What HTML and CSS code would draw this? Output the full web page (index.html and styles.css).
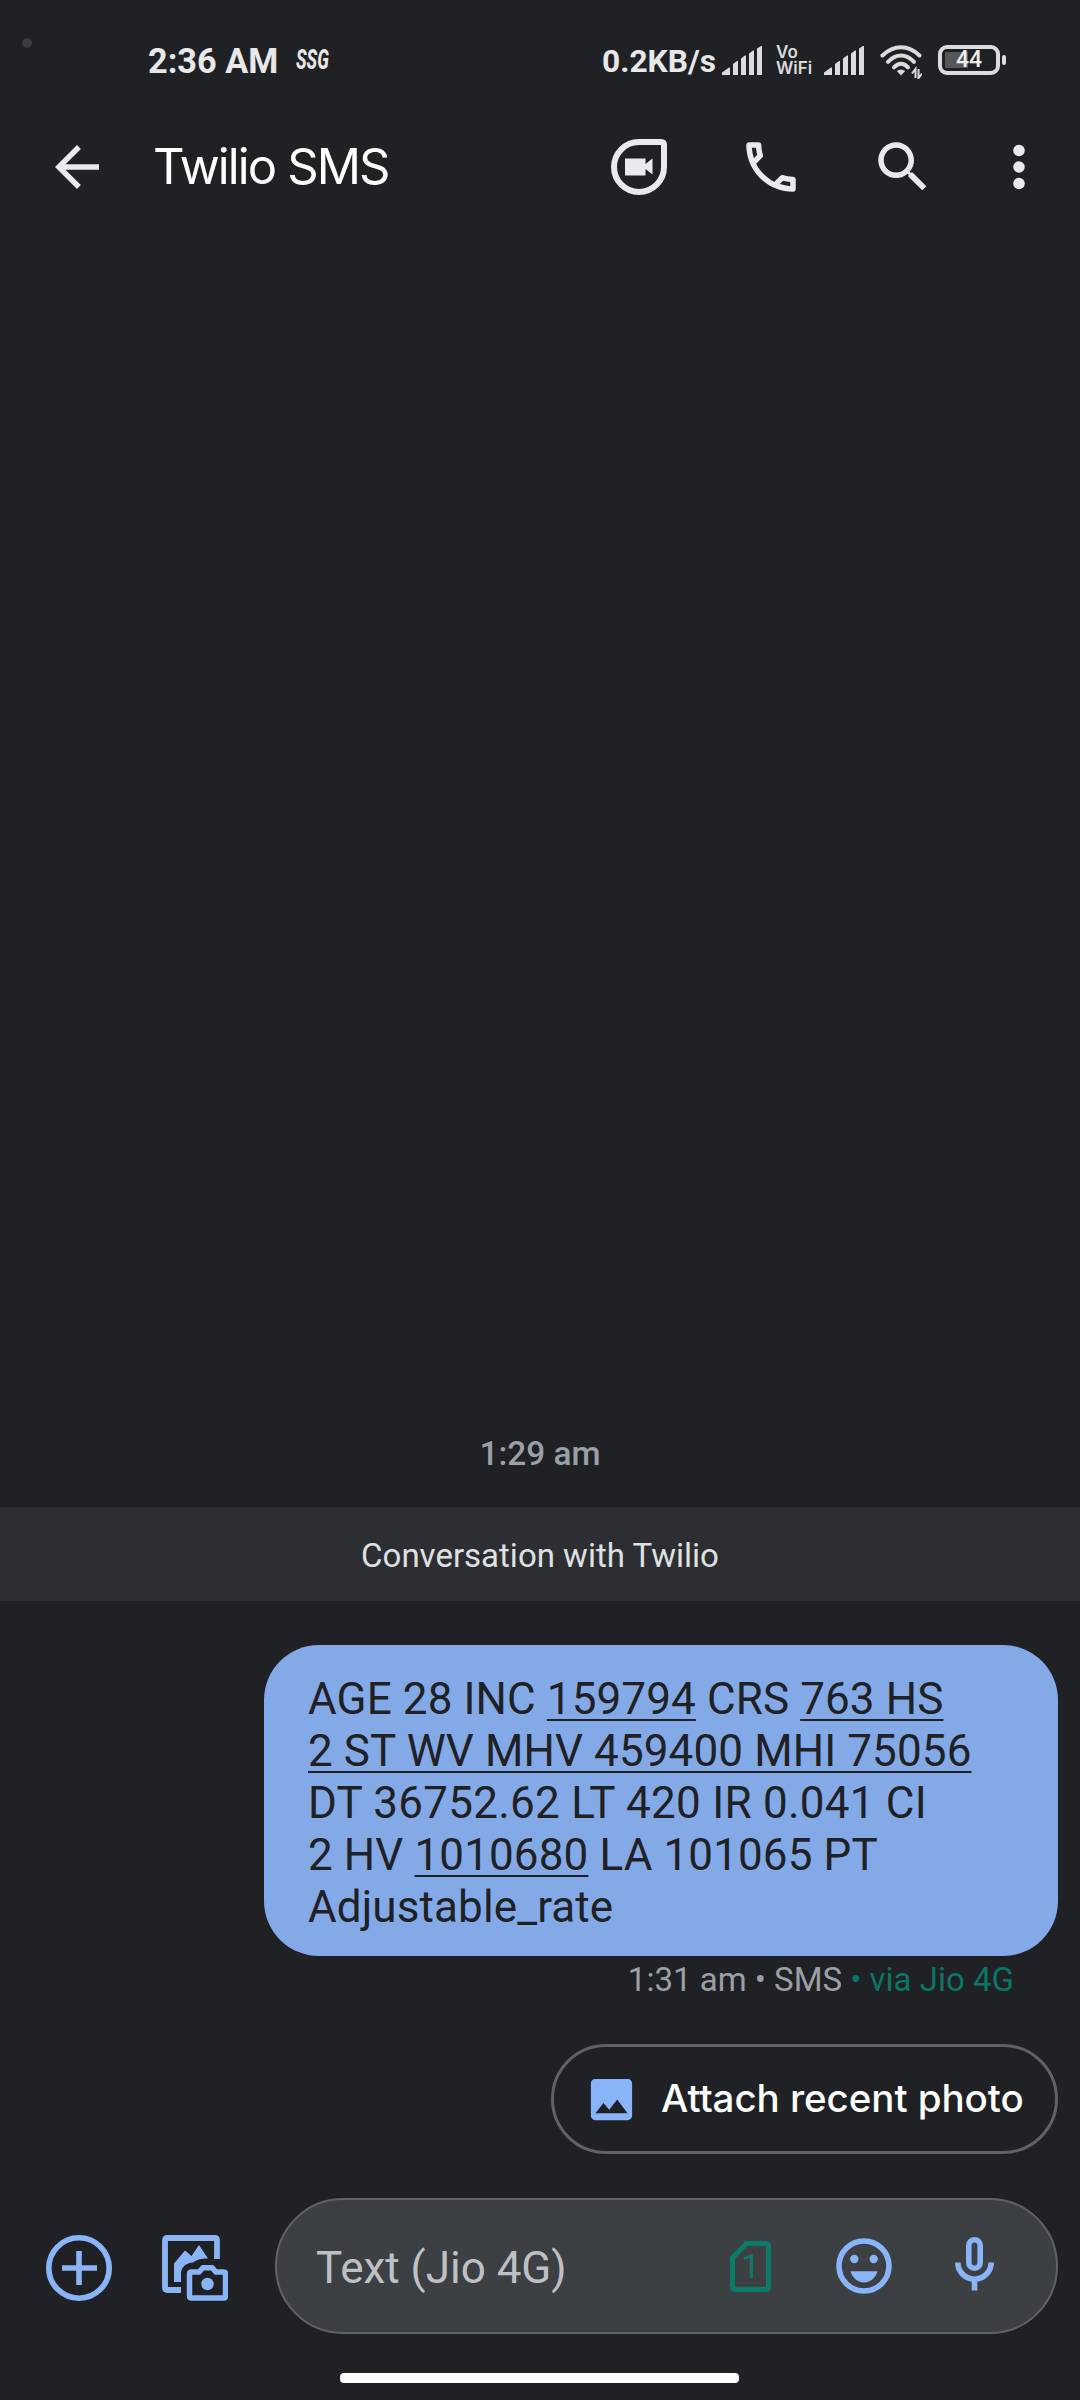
FILE: index.html
```html
<!DOCTYPE html>
<html lang="en">
<head>
<meta charset="utf-8">
<title>Twilio SMS</title>
<link rel="stylesheet" href="styles.css">
</head>
<body>
<div class="screen">
  <div class="status">
    <span class="dot"></span>
    <span class="clock">2:36 AM</span>
    <span class="ssg">SSG</span>
    <span class="speed">0.2KB/s</span>
    <svg class="bars" viewBox="0 0 40 29"><path d="M0 29v-2.500l7-5h1V29zM11 29V18l4-3h1v14zM19 29V12.500l4-3h1V29zM27 29V7.500l4-3h1V29zM35 29V2.500l4-2.500h1v29z"/></svg>
    <span class="vowifi"><span>Vo</span><span>WiFi</span></span>
    <svg class="bars" viewBox="0 0 40 29"><path d="M0 29v-2.500l7-5h1V29zM11 29V18l4-3h1v14zM19 29V12.500l4-3h1V29zM27 29V7.500l4-3h1V29zM35 29V2.500l4-2.500h1v29z"/></svg>
    <svg class="wifi" viewBox="0 0 42 34"><g fill="none" stroke="#dcdcdc" stroke-width="4" stroke-linecap="round"><path d="M2.500 10.500Q11 2.200 21 2.200t18.500 8.300"/><path d="M8 16.800q6-6.300 13-6.300t13 6.300"/><path d="M14 22.300q3.500-3.600 7-3.600t7 3.600"/></g><path fill="#dcdcdc" d="M16.800 26q4.200-3 8.400 0L21 30.500z"/><path fill="none" stroke="#dcdcdc" stroke-width="2" d="M35.500 33v-9l-3.500 4.500M38.500 24v9l3.500-4.500"/></svg>
    <span class="battery"><b>44</b></span>
  </div>

  <header class="appbar">
    <svg class="icon" viewBox="0 0 24 24"><path d="M20 11H7.830l5.590-5.590L12 4l-8 8 8 8 1.410-1.410L7.830 13H20v-2z"/></svg>
    <h1>Twilio SMS</h1>
    <svg class="icon duo" viewBox="0 0 66 66"><path fill="none" stroke="#e8eaed" stroke-width="6" d="M33 8h22q3 0 3 3v22a25 25 0 1 1-25-25z"/><path d="M19 24.500h20.500V30l7-5.500v16l-7-5.500v6.500H19z"/></svg>
    <svg class="icon phone" viewBox="0 0 24 24"><path d="M6.540 5c.06.89.21 1.760.45 2.590l-1.200 1.200c-.41-1.200-.67-2.470-.76-3.790h1.510m9.860 12.020c.85.24 1.720.39 2.600.45v1.490c-1.320-.09-2.590-.35-3.800-.75l1.200-1.190M7.500 3H4c-.55 0-1 .45-1 1 0 9.390 7.610 17 17 17 .55 0 1-.45 1-1v-3.490c0-.55-.45-1-1-1-1.240 0-2.450-.2-3.570-.57-.1-.04-.21-.05-.31-.05-.26 0-.51.1-.71.290l-2.200 2.200c-2.830-1.450-5.150-3.760-6.590-6.590l2.200-2.200c.28-.28.36-.67.25-1.020C8.700 6.450 8.500 5.250 8.500 4c0-.55-.45-1-1-1z"/></svg>
    <svg class="icon search" viewBox="0 0 24 24"><path d="M15.500 14h-.79l-.28-.27C15.410 12.590 16 11.110 16 9.500 16 5.910 13.090 3 9.500 3S3 5.910 3 9.500 5.910 16 9.500 16c1.610 0 3.090-.59 4.230-1.570l.27.28v.79l5 4.990L20.490 19l-4.990-5zm-6 0C7.010 14 5 11.990 5 9.500S7.010 5 9.500 5 14 7.010 14 9.500 11.990 14 9.500 14z"/></svg>
    <svg class="icon more" viewBox="0 0 24 24"><circle cx="12" cy="6" r="2.100"/><circle cx="12" cy="12" r="2.100"/><circle cx="12" cy="18" r="2.100"/></svg>
  </header>

  <main class="thread">
    <div class="time">1:29 am</div>
    <div class="banner">Conversation with Twilio</div>
    <div class="bubble">
      <div>AGE 28 INC <u>159794</u> CRS <u>763 HS</u></div>
      <div><u>2 ST WV MHV 459400 MHI 75056</u></div>
      <div class="loose">DT 36752.62 LT 420 IR 0.041 CI</div>
      <div>2 HV <u>1010680</u> LA 101065 PT</div>
      <div>Adjustable_rate</div>
    </div>
    <div class="meta">1:31 am • SMS <span>• via Jio 4G</span></div>
  </main>

  <button class="chip">
    <svg viewBox="0 0 24 24"><path d="M21 19V5c0-1.100-.9-2-2-2H5c-1.100 0-2 .9-2 2v14c0 1.100.9 2 2 2h14c1.100 0 2-.9 2-2zM8.500 13.500l2.500 3.010L14.500 12l4.500 6H5l3.500-4.500z"/></svg>
    <span>Attach recent photo</span>
  </button>

  <footer class="composer">
    <svg class="icon attach" viewBox="0 0 66 66"><circle cx="33" cy="33" r="30.200" fill="none" stroke="#8ab4f8" stroke-width="5.600"/><path d="M30.200 16h5.600v14.200H51v5.600H35.800V50h-5.600V35.800H16v-5.600h14.200z"/></svg>
    <svg class="icon gallery" viewBox="0 0 66 66"><path fill="none" stroke="#8ab4f8" stroke-width="5.800" d="M19 55H5.500Q3 55 3 52.500v-47Q3 3 5.500 3h47Q55 3 55 5.500V24"/><path d="M12 47V28.500L23 15.500l6.500 5.500L37 10l9 13.500c-6-.5-11 1-15 4-7 0-12 5-12 11V47z"/><path fill="none" stroke="#8ab4f8" stroke-width="5.500" d="M29.500 37h7.500l4-4.300h9l4 4.300h7.500q2 0 2 2v22q0 2-2 2h-32q-2 0-2-2V39q0-2 2-2z"/><circle cx="45.500" cy="49" r="6.200"/></svg>
    <div class="field">
      <span class="placeholder">Text (Jio 4G)</span>
      <span class="sim"><svg viewBox="0 0 41 51"><path fill="none" stroke="#0b7a69" stroke-width="5" d="M16.500 2.500H35.500q3 0 3 3v40q0 3-3 3h-30q-3 0-3-3V17z"/></svg><b>1</b></span>
      <svg class="icon smile" viewBox="0 0 66 66"><circle cx="33" cy="33" r="25" fill="none" stroke="#8ab4f8" stroke-width="5.600"/><circle cx="23.300" cy="26" r="4.200"/><circle cx="42.700" cy="26" r="4.200"/><path d="M19.500 38.300h27c-2 7-7.500 11.200-13.500 11.200s-11.500-4.200-13.500-11.200z"/></svg>
      <svg class="mic" viewBox="0 0 39 54"><rect x="13.800" y="2.800" width="11.400" height="28.400" rx="5.700" fill="none" stroke="#8ab4f8" stroke-width="5.600"/><path fill="none" stroke="#8ab4f8" stroke-width="5.600" d="M2.800 25.500a16.700 16.700 0 0 0 33.400 0M19.500 42v11.500"/></svg>
    </div>
  </footer>
  <div class="home"></div>
</div>
</body>
</html>
```
FILE: styles.css
```css
* { box-sizing: border-box; }
body { margin: 0; background: #202124; font-family: Roboto, "Noto Sans", sans-serif; }
.screen { width: 1080px; height: 2400px; display: flex; flex-direction: column; background: #202124; overflow: hidden; }
svg { display: block; flex: none; }
.icon { width: 66px; height: 66px; fill: #e8eaed; }

.status { height: 120px; padding-right: 80px; display: flex; align-items: center; color: #e8e8e8; white-space: nowrap; }
.dot { width: 10px; height: 10px; margin: -34px 0 0 22px; border-radius: 50%; background: #3a3b3e; }
.clock { margin: 2px 0 0 116px; font-size: 34.300px; font-weight: 700; }
.ssg { margin-left: 18px; font-size: 27px; font-weight: 800; font-style: italic; transform: scaleX(.65); transform-origin: left; width: 36px; }
.speed { margin: 2px 0 0 auto; font-size: 31.700px; font-weight: 700; }
.bars { width: 40px; height: 29px; fill: #dcdcdc; margin-left: 6px; }
.vowifi { width: 36px; margin: 0 6px 0 14px; display: flex; flex-direction: column; font: 600 17px/16px Inter, sans-serif; color: #dcdcdc; }
.wifi { width: 42px; height: 34px; margin: 3px 16px 0; }
.battery { position: relative; width: 62px; height: 30px; border: 4px solid #dcdcdc; border-radius: 9px; background: linear-gradient(#56575a, #56575a) 3px 3px / 23px 16px no-repeat; display: flex; align-items: center; justify-content: center; }
.battery b { font: 500 23px/22px Roboto, sans-serif; color: #eee; }
.battery::after { content: ""; position: absolute; left: 60px; top: 6px; width: 4px; height: 10px; border-radius: 2px; background: #dcdcdc; }

.appbar { height: 94px; padding-left: 44px; display: flex; align-items: center; }
.appbar h1 { margin: 0; padding-left: 43px; width: 501px; font: 400 49px/60px Inter, sans-serif; letter-spacing: -1.900px; color: #fff; white-space: nowrap; }
.appbar .duo { margin-left: -5px; }
.phone, .search { margin-left: 66px; }
.more { margin-left: 50px; }

.thread { flex: 1; display: flex; flex-direction: column; justify-content: flex-end; }
.time { text-align: center; font-size: 33.400px; line-height: 39px; font-weight: 500; color: #9aa0a6; margin-bottom: 34px; }
.banner { height: 94px; line-height: 97px; text-align: center; font-size: 33px; background: #2d2e31; color: #dfe0e3; }
.bubble { width: 794px; height: 311px; margin: 44px 22px 0 auto; padding: 28px 44px 23px; border-radius: 55px; background: #84a9e7; color: #202124; font-size: 44px; line-height: 52px; letter-spacing: .110px; white-space: nowrap; }
.bubble .loose { letter-spacing: .250px; }
.bubble u { text-decoration-thickness: 2px; text-underline-offset: 5px; text-decoration-skip-ink: none; }
.meta { margin: 4px 66px 45px 0; text-align: right; font-size: 33px; line-height: 39px; color: #9aa0a6; }
.meta span { color: #0b7568; }

.chip { align-self: flex-end; width: 507px; height: 110px; margin-right: 22px; padding: 0 0 0 30px; display: flex; align-items: center; gap: 22px; border: 3px solid #5f6368; border-radius: 55px; background: none; font: 500 38.500px/50px Inter, sans-serif; color: #fff; white-space: nowrap; }
.chip svg { width: 55px; height: 55px; fill: #8ab4f8; }
.chip span { letter-spacing: -.050px; margin-top: -2px; }

.composer { margin-top: 44px; height: 136px; padding: 0 22px 0 46px; display: flex; align-items: center; }
.composer .icon { fill: #8ab4f8; }
.composer .attach { margin-top: 4px; }
.composer .gallery { margin: 4px 0 0 50px; }
.field { margin-left: auto; width: 783px; height: 136px; padding: 0 62px 0 39px; border: 2px solid #5f6368; border-radius: 68px; background: #3c4043; display: flex; align-items: center; }
.placeholder { font-size: 44px; color: #bdc1c6; flex: 1; margin-top: 3px; white-space: nowrap; }
.sim { position: relative; width: 41px; height: 51px; margin-right: 60px; }
.sim svg { width: 41px; height: 51px; }
.sim b { position: absolute; inset: 0; text-align: center; font: 400 33px/52px Roboto, sans-serif; color: #0b7a69; }
.mic { width: 39px; height: 54px; margin-left: 58px; margin-top: -4px; }
.home { width: 399px; height: 10px; margin: 39px 0 17px 340px; border-radius: 4px; background: #fff; }
```
